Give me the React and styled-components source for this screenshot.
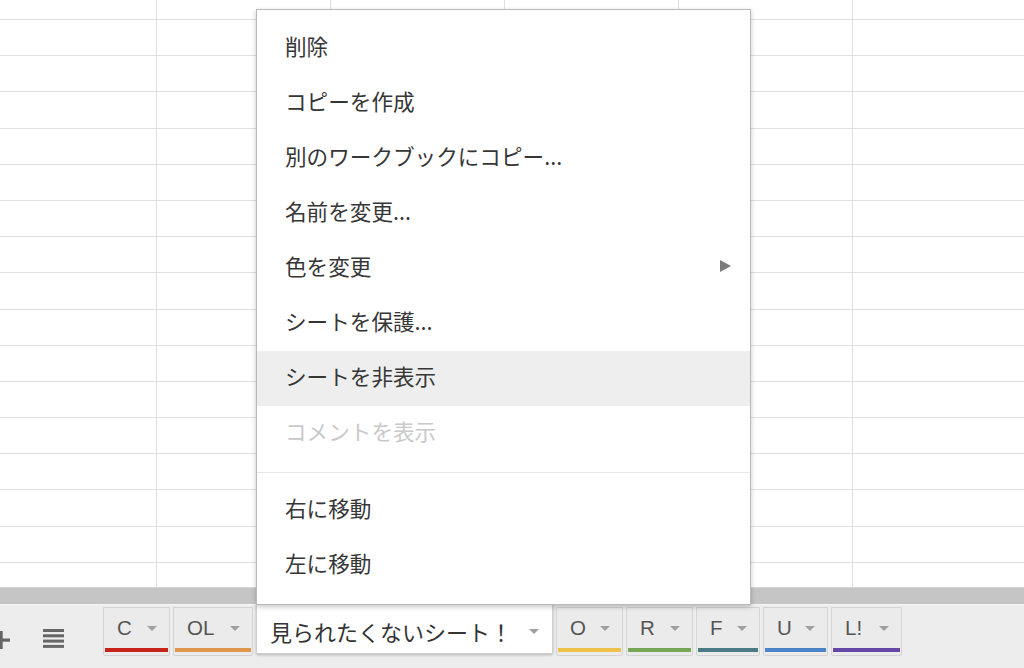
import React from "react";
import styled, { createGlobalStyle } from "styled-components";

const GlobalStyle = createGlobalStyle`
  html, body { margin: 0; padding: 0; background: #fff; overflow: hidden; }
  * { box-sizing: border-box; }
`;

const Page = styled.div`
  position: relative;
  width: 1024px;
  height: 668px;
  display: flex;
  flex-direction: column;
  overflow: hidden;
  font-family: "Noto Sans CJK JP", "Noto Sans", sans-serif;
`;

const Sheet = styled.div`
  height: 587px;
  overflow: hidden;
  background: #fff;
  display: grid;
  grid-template-columns: 157px repeat(5, 174px) 1fr;
  grid-template-rows: 20px repeat(15, 36.2px) 30px;
`;

const Cell = styled.div`
  border-right: 1px solid #dfdfdf;
  border-bottom: 1px solid #dfdfdf;
`;

const ScrollBand = styled.div`
  height: 18px;
  background: #c5c5c5;
  border-top: 1px solid #d6d6d6;
  border-bottom: 1px solid #f6f6f6;
`;

const TabBar = styled.div`
  flex: 1;
  background: #ededed;
  display: flex;
  align-items: flex-start;
  padding-top: 2px;
`;

const IconSlot = styled.div`
  display: flex;
  margin-left: ${(p) => p.$ml}px;
  margin-top: ${(p) => p.$mt}px;
  margin-right: ${(p) => p.$mr || 0}px;
`;

const Tabs = styled.div`
  display: flex;
  gap: 3px;
  align-items: flex-start;
`;

const Tab = styled.div`
  height: 49px;
  display: flex;
  flex-direction: column;
  background: ${(p) => (p.$active ? "#fff" : "#ebebeb")};
  border: 1px solid ${(p) => (p.$active ? "#cfcfcf" : "#d4d4d4")};
  border-top: ${(p) => (p.$active ? "none" : "1px solid #d4d4d4")};
  border-radius: 0 0 2px 2px;
  margin-top: ${(p) => (p.$active ? "-2px" : "0")};
  box-shadow: ${(p) => (p.$active ? "0 1px 3px rgba(0,0,0,0.25)" : "none")};
  z-index: ${(p) => (p.$active ? 1 : 0)};
`;

const TabContent = styled.div`
  flex: 1;
  display: flex;
  align-items: center;
  padding: ${(p) => (p.$active ? "4px 13px 0 13px" : "0 12px 0 13px")};
`;

const TabLabel = styled.span`
  font-family: ${(p) =>
    p.$cjk
      ? `"Noto Sans CJK JP", sans-serif`
      : `"Liberation Sans", Arial, sans-serif`};
  font-size: ${(p) => (p.$cjk ? "22px" : "20.5px")};
  line-height: 1;
  color: ${(p) => (p.$cjk ? "#333" : "#555")};
  white-space: nowrap;
`;

const Caret = styled.span`
  width: 0;
  height: 0;
  margin-left: auto;
  border-left: 5px solid transparent;
  border-right: 5px solid transparent;
  border-top: 5px solid #a0a0a0;
`;

const ColorBar = styled.div`
  height: 4px;
  margin: 0 1px 3px;
  background: ${(p) => p.$color};
`;

const Menu = styled.div`
  position: absolute;
  left: 256px;
  top: 9px;
  width: 495px;
  height: 596px;
  background: #fff;
  border: 1px solid #b9b9b9;
  box-shadow: 0 2px 5px rgba(0, 0, 0, 0.22);
  padding: 11px 0;
  z-index: 5;
  display: flex;
  flex-direction: column;
`;

const MenuItem = styled.div`
  height: 55px;
  display: flex;
  align-items: center;
  justify-content: space-between;
  padding: 0 19px 6px 28px;
  background: ${(p) => (p.$hover ? "#eeeeee" : "transparent")};
  color: ${(p) => (p.$disabled ? "#c9c9c9" : "#363636")};
  font-size: 21.6px;
  line-height: 1;
  white-space: nowrap;
`;

const Separator = styled.div`
  height: 1px;
  margin: 11px 0 10px;
  background: #e6e6e6;
`;

const SubArrow = styled.span`
  width: 0;
  height: 0;
  margin-top: 0;
  border-top: 6px solid transparent;
  border-bottom: 6px solid transparent;
  border-left: 11px solid #7a7a7a;
`;

const PlusIcon = () => (
  <svg width="18" height="18" viewBox="0 0 18 18">
    <rect x="0" y="7.5" width="18" height="3.2" fill="#666" />
    <rect x="7.5" y="0" width="3.2" height="18" fill="#666" />
  </svg>
);

const ListIcon = () => (
  <svg width="21" height="19" viewBox="0 0 21 19">
    {[0, 5.3, 10.6, 15.9].map((y) => (
      <rect key={y} x="0" y={y} width="21" height="3" fill="#666" />
    ))}
  </svg>
);

const sheetTabs = [
  { label: "C", color: "#c5221a", width: 67 },
  { label: "OL", color: "#e0964a", width: 80 },
  { label: "見られたくないシート！", active: true, width: 297 },
  { label: "O", color: "#eec24a", width: 67 },
  { label: "R", color: "#76a757", width: 67 },
  { label: "F", color: "#4b7b83", width: 64 },
  { label: "U", color: "#4b84c9", width: 65 },
  { label: "L!", color: "#6247a6", width: 71 },
];

const menuTop = [
  { label: "削除" },
  { label: "コピーを作成" },
  { label: "別のワークブックにコピー..." },
  { label: "名前を変更..." },
  { label: "色を変更", sub: true },
  { label: "シートを保護..." },
  { label: "シートを非表示", hover: true },
  { label: "コメントを表示", disabled: true },
];

const menuBottom = [{ label: "右に移動" }, { label: "左に移動" }];

export default function App() {
  const cells = [];
  for (let r = 0; r < 17; r++) {
    for (let c = 0; c < 7; c++) cells.push(<Cell key={`${r}-${c}`} />);
  }
  return (
    <>
      <GlobalStyle />
      <Page>
        <Sheet>{cells}</Sheet>
        <ScrollBand />
        <TabBar>
          <IconSlot $ml={-8} $mt={24}>
            <PlusIcon />
          </IconSlot>
          <IconSlot $ml={33} $mt={22} $mr={39}>
            <ListIcon />
          </IconSlot>
          <Tabs>
            {sheetTabs.map((t) => (
              <Tab
                key={t.label}
                $active={t.active}
                style={{ width: t.width }}
              >
                <TabContent $active={t.active}>
                  <TabLabel $cjk={t.active}>{t.label}</TabLabel>
                  <Caret />
                </TabContent>
                {!t.active && <ColorBar $color={t.color} />}
              </Tab>
            ))}
          </Tabs>
        </TabBar>
        <Menu>
          {menuTop.map((m) => (
            <MenuItem key={m.label} $hover={m.hover} $disabled={m.disabled}>
              <span>{m.label}</span>
              {m.sub && <SubArrow />}
            </MenuItem>
          ))}
          <Separator />
          {menuBottom.map((m) => (
            <MenuItem key={m.label}>
              <span>{m.label}</span>
            </MenuItem>
          ))}
        </Menu>
      </Page>
    </>
  );
}
